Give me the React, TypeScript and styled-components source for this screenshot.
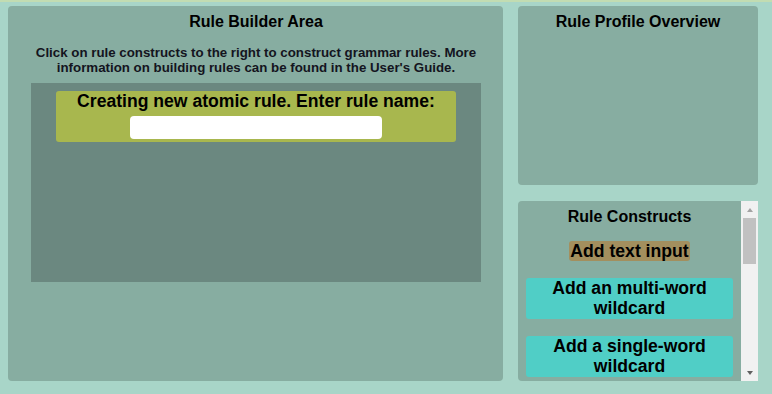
import styled, { createGlobalStyle } from "styled-components"

const Global = createGlobalStyle`
  html, body {
    margin: 0;
    padding: 0;
    background: #a8d5c8;
    font-family: "Liberation Sans", Arial, sans-serif;
  }
`

const Page = styled.div`
  height: 394px;
  box-sizing: border-box;
  border-top: 2px solid #c2dcb2;
  padding: 4px 14px 0 8px;
  display: flex;
  gap: 15px;
`

const Panel = styled.div`
  background: #87ada1;
  border-radius: 4px;
  box-sizing: border-box;
`

const BuilderPanel = styled(Panel)`
  width: 495px;
  height: 375px;
  padding: 7px 22px 0 23px;
  text-align: center;
`

const Title = styled.h2`
  margin: 0;
  font-size: 16px;
  font-weight: bold;
  line-height: 18px;
  color: #000;
`

const Help = styled.p`
  margin: 14px 0 7px;
  font-size: 13.3px;
  font-weight: bold;
  line-height: 15.3px;
  color: #141420;
`

const Workspace = styled.div`
  height: 199px;
  background: #6b8880;
  padding-top: 8px;
  box-sizing: border-box;
  display: flex;
  flex-direction: column;
  align-items: center;
`

const NameBox = styled.div`
  width: 400px;
  height: 51px;
  box-sizing: border-box;
  background: #a8b74e;
  border-radius: 3px;
  display: flex;
  flex-direction: column;
  align-items: center;
`

const NameLabel = styled.div`
  font-size: 17.6px;
  font-weight: bold;
  line-height: 21px;
`

const NameInput = styled.input`
  margin-top: 4px;
  width: 252px;
  height: 23px;
  box-sizing: border-box;
  border: none;
  border-radius: 4px;
  background: #fff;
  outline: none;
`

const Side = styled.div`
  width: 240px;
  display: flex;
  flex-direction: column;
  gap: 16px;
`

const OverviewPanel = styled(Panel)`
  height: 179px;
  padding-top: 7px;
  text-align: center;
`

const ConstructsPanel = styled(Panel)`
  height: 180px;
  display: flex;
  overflow: hidden;
  border-radius: 4px 0 0 4px;
`

const ConstructsList = styled.div`
  flex: 1;
  overflow: hidden;
  padding: 7px 8px 0 8px;
  text-align: center;
`

const Scrollbar = styled.div`
  width: 17px;
  background: #f1f1f1;
  display: flex;
  flex-direction: column;
  align-items: center;
`

const Arrow = styled.div<{ $dir: "up" | "down" }>`
  height: 17px;
  width: 17px;
  display: flex;
  align-items: center;
  justify-content: center;

  &::after {
    content: "";
    width: 0;
    height: 0;
    border-left: 3.5px solid transparent;
    border-right: 3.5px solid transparent;
    ${p =>
      p.$dir === "up"
        ? "border-bottom: 4px solid #a3a3a3;"
        : "border-top: 4px solid #606060;"}
  }
`

const Track = styled.div`
  flex: 1;
  width: 100%;
  padding: 0 2px;
  box-sizing: border-box;
`

const Thumb = styled.div`
  height: 46px;
  background: #c1c1c1;
`

const Construct = styled.div<{ $kind: "text" | "wild" }>`
  font-size: 17.6px;
  font-weight: bold;
  line-height: 20px;
  color: #000;
  border-radius: 3px;
  ${p =>
    p.$kind === "text"
      ? `
    display: inline-block;
    background: #a38f5e;
    padding: 0 1px;
    margin-top: 15px;
  `
      : `
    display: block;
    background: #50cec6;
    padding: 0 0 1px;
    margin-top: 17px;
  `}
`

export default function App() {
  return (
    <>
      <Global />
      <Page>
        <BuilderPanel>
          <Title>Rule Builder Area</Title>
          <Help>
            Click on rule constructs to the right to construct grammar rules. More
            <br />
            information on building rules can be found in the User's Guide.
          </Help>
          <Workspace>
            <NameBox>
              <NameLabel>Creating new atomic rule. Enter rule name:</NameLabel>
              <NameInput type="text" />
            </NameBox>
          </Workspace>
        </BuilderPanel>
        <Side>
          <OverviewPanel>
            <Title>Rule Profile Overview</Title>
          </OverviewPanel>
          <ConstructsPanel>
            <ConstructsList>
              <Title>Rule Constructs</Title>
              <Construct $kind="text">Add text input</Construct>
              <Construct $kind="wild">
                Add an multi-word
                <br />
                wildcard
              </Construct>
              <Construct $kind="wild">
                Add a single-word
                <br />
                wildcard
              </Construct>
            </ConstructsList>
            <Scrollbar>
              <Arrow $dir="up" />
              <Track>
                <Thumb />
              </Track>
              <Arrow $dir="down" />
            </Scrollbar>
          </ConstructsPanel>
        </Side>
      </Page>
    </>
  )
}
